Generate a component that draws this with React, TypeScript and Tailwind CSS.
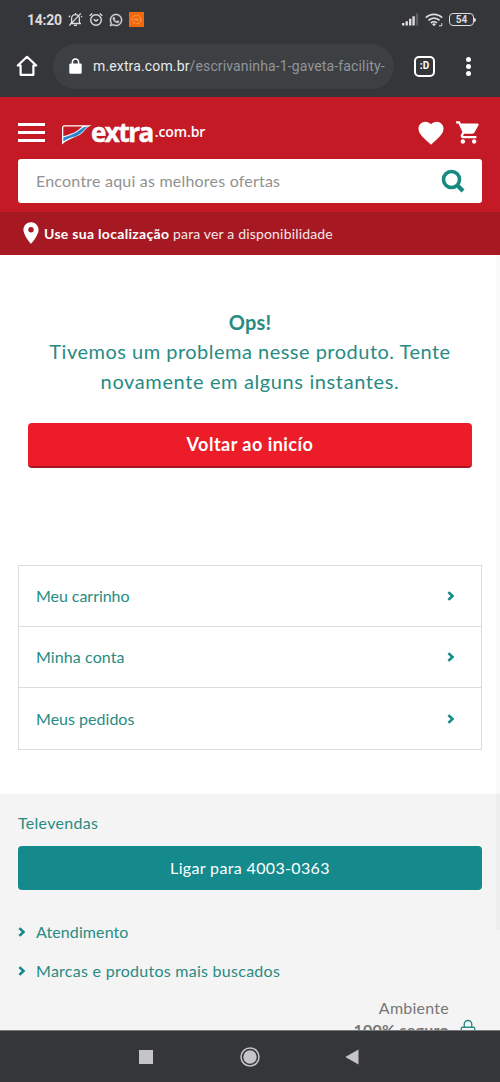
import React from 'react';
import { MdShoppingCart, MdFavorite, MdLocationOn } from 'react-icons/md';
import { FaWhatsapp } from 'react-icons/fa';
import { Lock } from 'lucide-react';

const menuItems = [
  { label: 'Meu carrinho', className: 'tracking-[-0.05px]' },
  { label: 'Minha conta', className: 'tracking-[0.1px]' },
  { label: 'Meus pedidos', className: 'tracking-[0.02px]' },
];

const footerLinks = [
  { label: 'Atendimento', className: 'tracking-[0.1px]' },
  { label: 'Marcas e produtos mais buscados', className: 'tracking-[0.27px]' },
];

const Chevron: React.FC = () => (
  <svg width="8" height="10" viewBox="0 0 8 10" fill="none" stroke="#168a8b" strokeWidth="2.6">
    <path d="M1.4 1.1 5.5 5 1.4 8.9" />
  </svg>
);

const StatusBar: React.FC = () => (
  <div className="flex h-[38px] items-center pl-[27px] pr-6 pt-px text-[#dcdcde]">
    <span className="w-[41px] whitespace-nowrap font-[Roboto] text-[14px] font-bold leading-none tracking-[-0.25px]">14:20</span>
    {/* muted bell */}
    <svg width="15" height="15" viewBox="0 0 15 15" fill="none" stroke="currentColor" strokeWidth="1.3">
      <path d="M2 11.5h11M3.6 11.3V6.5a3.9 3.9 0 0 1 7.8 0v4.8M6 13.3h3M7.5 1v1.6M1.3 13.6 12.8 1.4M1 5.2l1-1.6M14 5.2l-.7-1.2" />
    </svg>
    <svg className="ml-[6px]" width="14" height="15" viewBox="0 0 14 15" fill="none" stroke="currentColor" strokeWidth="1.4">
      <circle cx="7" cy="8" r="5.3" />
      <path d="m4.8 7.2 2.2 1.9 2.3-1.9M.7 3.8 3.3 1.4M13.3 3.8l-2.6-2.4" />
    </svg>
    <FaWhatsapp className="ml-[6px]" size={14} stroke="currentColor" strokeWidth={14} />
    <div className="ml-[6px] flex size-[15px] items-center justify-center bg-[#f2690d]">
      <svg width="11" height="11" viewBox="0 0 11 11" fill="none" stroke="#ffa05c">
        <circle cx="5.5" cy="5.5" r="4.3" strokeDasharray="3 1" />
        <path d="M3.6 5.5h3.8" strokeWidth="1.3" />
      </svg>
    </div>
    <div className="ml-auto flex items-center">
      <svg width="17" height="13" viewBox="0 0 17 13" fill="currentColor">
        <path d="M0 10h2.4v2.5H0zM3.5 8.2h2.4v4.3H3.5zM7 5.8h2.4v6.7H7zM10.4 3.2h2.4v9.3h-2.4z" />
        <path d="M13.8.5h2.4v12h-2.4z" opacity=".25" />
      </svg>
      <svg className="ml-[6px]" width="18" height="14" viewBox="0 0 18 14" fill="none" stroke="currentColor" strokeWidth="1.7">
        <path d="M.8 4.7a11.6 11.6 0 0 1 16.4 0M3.4 7.4a7.9 7.9 0 0 1 11.2 0M5.8 10a4.5 4.5 0 0 1 6.2 0" />
        <path d="m7 11.2 2-1.2 2 1.2-2 2.1z" fill="currentColor" stroke="none" />
        <path d="M14 12.8h2.8v-2.6" strokeWidth="1" />
      </svg>
      <div className="ml-[6px] flex h-[13px] w-[25px] items-center justify-center rounded-[4px] border-[1.5px] border-current font-[Roboto] text-[10px] font-bold leading-none">
        54
      </div>
      <div className="h-1 w-[2px] rounded-r bg-current" />
    </div>
  </div>
);

const BrowserBar: React.FC = () => (
  <div className="flex h-[59px] items-center pb-[3px] pl-4">
    <svg width="22" height="22" viewBox="0 0 22 22" fill="none" stroke="white" strokeWidth="2.2" strokeLinejoin="round">
      <path d="M4.6 10.5H1.8L11 1.8l9.2 8.7h-2.8v9.3H4.6z" />
    </svg>
    <div className="ml-[15px] flex h-[45px] w-[341px] items-center rounded-full bg-[#3d4043] pl-[16px]">
      <svg className="shrink-0" width="13" height="16" viewBox="0 0 13 16" fill="none">
        <rect x=".3" y="5.6" width="12.400" height="10.200" rx="1.200" fill="white" />
        <path d="M3.400 6.500V4a3.100 3.100 0 0 1 6.200 0v2.500" stroke="white" strokeWidth="1.500" />
      </svg>
      <span className="ml-[11px] whitespace-nowrap font-[Roboto] text-[14px] leading-none tracking-[0.14px] text-[#92959a]">
        <span className="text-[#e8eaed]">m.extra.com.br</span>/escrivaninha-1-gaveta-facility-
      </span>
    </div>
    <div className="ml-[20px] flex size-[21px] items-center justify-center rounded-[5px] border-2 border-white font-[Roboto] text-[10px] font-bold leading-none text-white">
      :D
    </div>
    <div className="ml-[31px] flex flex-col gap-[2px]">
      <span className="size-[5px] rounded-full bg-white" />
      <span className="size-[5px] rounded-full bg-white" />
      <span className="size-[5px] rounded-full bg-white" />
    </div>
  </div>
);

const Logo: React.FC = () => (
  <div className="ml-[17px] flex items-start font-['Open_Sans'] leading-none text-white">
    <svg width="30" height="20" viewBox="0 0 30 20" className="mt-[5px]">
      <path d="M0 19.500V3C0 1.200 1 .3 2.800.3H30c-4 .8-6 3.500-9 7C17 12 8 12.500 0 19.500z" fill="#fff" />
      <path d="M1.300 11.200V3c0-1 .6-1.400 1.500-1.400H20.500C16 5 14 8.300 1.300 11.200z" fill="#c31a25" />
      <path d="M1.300 16.400v-3.900C13 9.500 17 5.500 20.500 3c1.500-1 3-1.400 5.500-1.500C22 4.300 20 8.700 14 11.200 9 12.600 5 13.600 1.300 16.400z" fill="#2787c8" />
    </svg>
    <span className="-ml-px -mt-px text-[26px] font-bold tracking-[-1.5px] [-webkit-text-stroke:0.5px_white]">extra</span>
    <span className="ml-[2px] mt-[5px] text-[14px] font-semibold tracking-[-0.1px]">.com.br</span>
  </div>
);

const Header: React.FC = () => (
  <header className="bg-[#c31a25]">
    <div className="flex h-[62px] items-center pl-[18px] pr-[18px] pt-[9px]">
      <div className="flex w-[27px] flex-col gap-[5px]">
        <span className="h-[3px] bg-white" />
        <span className="h-[3px] bg-white" />
        <span className="h-[3px] bg-white" />
      </div>
      <Logo />
      <MdFavorite size={30} className="ml-auto text-white" />
      <MdShoppingCart size={27} className="ml-[9px] text-white" />
    </div>
    <div className="px-[18px] pb-[9px]">
      <div className="flex h-[44px] items-center justify-between rounded-[3px] bg-white pl-[18px] pr-[17px]">
        <span className="text-[16px] tracking-[0.21px] text-[#919191]">Encontre aqui as melhores ofertas</span>
        <svg width="24" height="24" viewBox="0 0 24 24" fill="none" stroke="#168a80" strokeWidth="3.6">
          <circle cx="10.5" cy="10.5" r="8" />
          <path d="m16 16 6 6" strokeWidth="4.2" />
        </svg>
      </div>
    </div>
    <div className="flex h-[43px] items-center bg-[#a61822] pb-px pl-[18px] text-[14px] text-white/90">
      <MdLocationOn size={26} className="text-white" />
      <span className="whitespace-nowrap tracking-[0.17px]">
        <strong className="font-bold tracking-[0.3px] text-white">Use sua localização</strong> para ver a disponibilidade
      </span>
    </div>
  </header>
);

const NavBar: React.FC = () => (
  <nav className="flex h-[52px] shrink-0 items-center justify-between border-t border-[#77787a] bg-[#35363a] pl-[139px] pr-[141px]">
    <span className="size-[14px] bg-[#c5c5c9]" />
    <svg className="translate-x-px" width="20" height="20" viewBox="0 0 20 20">
      <circle cx="10" cy="10" r="9" fill="none" stroke="#c5c5c9" strokeWidth="1.5" />
      <circle cx="10" cy="10" r="6.7" fill="#c5c5c9" />
    </svg>
    <svg width="14" height="16" viewBox="0 0 14 16">
      <path d="M13.5.5v15L.3 8z" fill="#c5c5c9" />
    </svg>
  </nav>
);

export default function App() {
  return (
    <div className="flex h-[1082px] w-[500px] flex-col overflow-hidden bg-white font-[Lato,sans-serif] text-[#288b83]">
      <div className="shrink-0 bg-[#35363a]">
        <StatusBar />
        <BrowserBar />
      </div>
      <Header />

      <main className="relative flex min-h-0 flex-1 flex-col overflow-hidden">
        <section className="px-[28px] pt-[52px] text-center text-[20px] leading-[30px]">
          <h1 className="font-bold tracking-[0.2px]">Ops!</h1>
          <p className="-mt-px">
            <span className="tracking-[0.49px]">Tivemos um problema nesse produto. Tente</span>
            <br />
            <span className="tracking-[0.62px]">novamente em alguns instantes.</span>
          </p>
          <button className="mt-[27px] h-[45px] w-full rounded-[4px] border-b-2 border-[#a31822] bg-[#ec1d28] pb-px text-[18px] font-bold leading-none tracking-[0.48px] text-white">
            Voltar ao inicío
          </button>
        </section>

        {/* Account shortcuts */}
        <ul className="mx-[18px] mt-[97px] divide-y divide-[#dcdcdc] border border-[#dcdcdc]">
          {menuItems.map((item) => (
            <li key={item.label} className="flex h-[61px] items-center justify-between pl-[17px] pr-[26px] text-[16px]">
              <span className={item.className}>{item.label}</span>
              <Chevron />
            </li>
          ))}
        </ul>

        <footer className="mt-[44px] flex-1 bg-[#f4f4f4] px-[18px] pt-[17px] text-[16px] leading-6">
          <p className="tracking-[0.3px]">Televendas</p>
          <button className="mt-[11px] h-[44px] w-full rounded-[4px] bg-[#148a8d] pb-px tracking-[0.35px] text-white">
            Ligar para 4003-0363
          </button>
          <ul className="mt-[30px] flex flex-col gap-[15px]">
            {footerLinks.map((link) => (
              <li key={link.label} className="flex items-center gap-[10px]">
                <Chevron />
                <span className={link.className}>{link.label}</span>
              </li>
            ))}
          </ul>
          <div className="mt-[14px] flex justify-end pr-[5px] text-[#777]">
            <p className="text-right leading-[22px] tracking-[0.25px]">
              Ambiente
              <br />
              <strong>100% seguro</strong>
            </p>
            <Lock size={18} strokeWidth={1.8} className="ml-[10px] mt-[22px] text-[#288b83]" />
          </div>
        </footer>

        {/* scroll indicator */}
        <div className="absolute right-0 top-0 h-[675px] w-1 bg-black/[0.025]" />
      </main>

      <NavBar />
    </div>
  );
}
